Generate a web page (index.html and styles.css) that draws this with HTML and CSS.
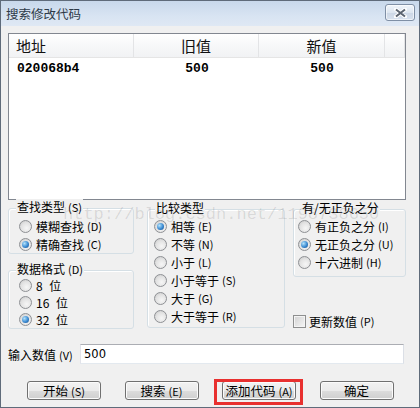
FILE: index.html
```html
<!DOCTYPE html>
<html lang="zh-CN">
<head>
    <meta charset="UTF-8">
    <title>搜索修改代码</title>
    <link rel="stylesheet" href="styles.css">
</head>
<body>
    <div class="window">
        <div class="titlebar">
            <span class="title">搜索修改代码</span>
            <button class="close-btn">
                <svg width="15" height="10" viewBox="0 0 15 10">
                    <path d="M3 1.5 L12 8.5 M12 1.5 L3 8.5" stroke="#fff" stroke-width="4" stroke-linecap="round"/>
                    <path d="M3 1.5 L12 8.5 M12 1.5 L3 8.5" stroke="#5b6470" stroke-width="2"/>
                </svg>
            </button>
        </div>

        <div class="client">
            <div class="list">
                <div class="list-head">
                    <span class="cell cell-addr">地址</span>
                    <span class="cell cell-old">旧值</span>
                    <span class="cell cell-new">新值</span>
                    <span class="cell cell-rest"></span>
                </div>
                <div class="list-row">
                    <span class="cell cell-addr">020068b4</span>
                    <span class="cell cell-old">500</span>
                    <span class="cell cell-new">500</span>
                </div>
            </div>

            <div class="options">
                <div class="col-left">
                    <div class="group g-search">
                        <span class="group-title">查找类型<small>(S)</small></span>
                        <div class="radio-row"><span class="radio"></span>模糊查找<small>(D)</small></div>
                        <div class="radio-row"><span class="radio on"></span>精确查找<small>(C)</small></div>
                    </div>
                    <div class="group g-format">
                        <span class="group-title">数据格式<small>(D)</small></span>
                        <div class="radio-row"><span class="radio"></span>8 位</div>
                        <div class="radio-row"><span class="radio"></span>16 位</div>
                        <div class="radio-row"><span class="radio on"></span>32 位</div>
                    </div>
                </div>

                <div class="group g-compare">
                    <span class="group-title">比较类型</span>
                    <div class="radio-row"><span class="radio on"></span>相等<small>(E)</small></div>
                    <div class="radio-row"><span class="radio"></span>不等<small>(N)</small></div>
                    <div class="radio-row"><span class="radio"></span>小于<small>(L)</small></div>
                    <div class="radio-row"><span class="radio"></span>小于等于<small>(S)</small></div>
                    <div class="radio-row"><span class="radio"></span>大于<small>(G)</small></div>
                    <div class="radio-row"><span class="radio"></span>大于等于<small>(R)</small></div>
                </div>

                <div class="col-right">
                    <div class="group g-sign">
                        <span class="group-title">有/无正负之分</span>
                        <div class="radio-row"><span class="radio"></span>有正负之分<small>(I)</small></div>
                        <div class="radio-row"><span class="radio on"></span>无正负之分<small>(U)</small></div>
                        <div class="radio-row"><span class="radio"></span>十六进制<small>(H)</small></div>
                    </div>
                    <div class="check-row"><span class="checkbox"></span>更新数值<small>(P)</small></div>
                </div>
            </div>

            <div class="value-row">
                <span class="value-label">输入数值<small>(V)</small></span>
                <div class="value-input">500</div>
            </div>

            <div class="buttons">
                <button class="btn">开始<small>(S)</small></button>
                <button class="btn">搜索<small>(E)</small></button>
                <button class="btn marked">添加代码<small>(A)</small></button>
                <button class="btn">确定</button>
            </div>
        </div>

        <div class="watermark">http://blog.csdn.net/1198738650</div>
    </div>
</body>
</html>
```

FILE: styles.css
```css
* {
    box-sizing: border-box;
}

body {
    margin: 0;
    font-family: "Noto Sans CJK SC", "DejaVu Sans", sans-serif;
    font-size: 12px;
    color: #000;
    background: #fff;
}

small {
    font-size: 11px;
    margin-left: 3px;
}

.window {
    position: relative;
    width: 420px;
    height: 408px;
    border: 1px solid #5f6b7a;
    background-color: #f0f0f0;
    overflow: hidden;
}

/* title bar */
.titlebar {
    height: 25px;
    display: flex;
    align-items: center;
    justify-content: space-between;
    padding: 0 4px 0 5px;
    background: linear-gradient(#c8d8eb, #d8e4f2 60%, #dfe8f4);
}

.title {
    font-size: 12.5px;
    color: #2e3a48;
    margin-top: -1px;
}

.close-btn {
    width: 30px;
    height: 17px;
    margin-top: -2px;
    padding: 0;
    display: flex;
    align-items: center;
    justify-content: center;
    border: 1px solid #7f8fa5;
    border-radius: 3px;
    background: linear-gradient(#f1f5fa, #dde6f0 50%, #ccd7e5 51%, #d8e2ee);
    box-shadow: inset 0 0 0 1px rgba(255, 255, 255, 0.6);
}

.client {
    padding-left: 7px;
}

/* list view */
.list {
    margin-top: 7px;
    width: 398px;
    height: 167px;
    border: 1px solid #828790;
    background: #fff;
}

.list-head {
    display: flex;
    height: 24px;
    border-bottom: 1px solid #e5e5e5;
    background: linear-gradient(#ffffff, #f7f8f9 50%, #f1f2f4);
}

.list-head .cell {
    font-size: 15px;
    line-height: 23px;
    border-right: 1px solid #e3e4e6;
    color: #111;
}

.cell {
    flex: none;
    text-align: center;
}

.cell-addr {
    width: 125px;
    padding-left: 7px;
    text-align: left;
}

.cell-old {
    width: 125px;
}

.cell-new {
    width: 126px;
}

.cell-rest {
    flex: 1;
}

.list-row {
    display: flex;
    margin-top: 4px;
    height: 14px;
    font-family: "Liberation Mono", monospace;
    font-weight: bold;
    font-size: 13px;
    line-height: 14px;
}

.list-row .cell-addr {
    padding-left: 8px;
}

.list-row .cell-old {
    padding-left: 1px;
}

/* option groups */
.options {
    display: flex;
    margin-top: 8px;
}

.col-left {
    width: 126px;
    display: flex;
    flex-direction: column;
}

.group {
    position: relative;
    border: 1px solid #d5dfe5;
    border-radius: 3px;
    box-shadow: inset 1px 1px 0 #fff;
}

.group-title {
    position: absolute;
    top: -10px;
    left: 7px;
    padding: 0 1px;
    line-height: 16px;
    background-color: #f0f0f0;
}

.g-search {
    height: 46px;
    padding: 8px 0 0 10px;
}

.g-format {
    height: 59px;
    margin-top: 16px;
    padding: 6px 0 0 10px;
    word-spacing: 4px;
}

.g-format .radio-row {
    height: 17px;
}

.g-compare {
    width: 138px;
    height: 119px;
    margin: 1px 0 0 13px;
    padding: 7px 0 0 6px;
}

.col-right {
    width: 113px;
    margin: 1px 0 0 8px;
    display: flex;
    flex-direction: column;
}

.g-sign {
    height: 68px;
    padding: 7px 0 0 4px;
}

.radio-row,
.check-row {
    display: flex;
    align-items: center;
    height: 18px;
    white-space: nowrap;
}

.radio {
    flex: none;
    position: relative;
    width: 13px;
    height: 13px;
    margin-right: 4px;
    border: 1px solid #8e9094;
    border-radius: 50%;
    background: radial-gradient(circle at 60% 65%, #f6f6f6, #e2e2e2 55%, #c4c4c4);
}

.radio.on::after {
    content: "";
    position: absolute;
    top: 2px;
    left: 2px;
    width: 7px;
    height: 7px;
    border-radius: 50%;
    background: radial-gradient(circle at 35% 35%, #b4e3fb, #3a8ad2 55%, #17467f);
}

.check-row {
    margin-top: auto;
    height: 16px;
}

.checkbox {
    flex: none;
    width: 13px;
    height: 13px;
    margin-right: 3px;
    border: 1px solid #8e8f8f;
    background: linear-gradient(135deg, #d2d2d2, #f6f6f6);
    box-shadow: inset 0 0 0 1px #f4f4f4;
}

/* value input */
.value-row {
    display: flex;
    align-items: center;
    margin-top: 15px;
    height: 20px;
}

.value-label {
    width: 72px;
}

.value-input {
    width: 324px;
    height: 20px;
    padding-left: 3px;
    line-height: 18px;
    font-family: "DejaVu Sans", sans-serif;
    font-size: 11.5px;
    border: 1px solid #abadb3;
    border-left-color: #e2e3ea;
    border-right-color: #dbdfe6;
    border-bottom-color: #e3e9ef;
    background: #fff;
}

/* bottom buttons */
.buttons {
    display: flex;
    gap: 23.5px;
    margin-top: 17px;
    padding-left: 19px;
}

.btn {
    position: relative;
    width: 74px;
    height: 19px;
    padding: 0;
    font-family: inherit;
    font-size: 12.5px;
    line-height: 17px;
    color: #000;
    border: 1px solid #707070;
    border-radius: 3px;
    background: linear-gradient(#f2f2f2, #ebebeb 50%, #dddddd 51%, #cfcfcf);
    box-shadow: inset 0 0 0 1px #fbfbfb;
}

.btn.marked::after {
    content: "";
    position: absolute;
    top: -3px;
    left: -9px;
    right: -8px;
    bottom: -6px;
    border: 3px solid #e8302f;
}

.watermark {
    position: absolute;
    left: 62px;
    top: 205px;
    font-family: "Liberation Mono", monospace;
    font-size: 17px;
    line-height: 18px;
    color: rgba(0, 0, 0, 0.11);
    pointer-events: none;
    white-space: nowrap;
}
```
